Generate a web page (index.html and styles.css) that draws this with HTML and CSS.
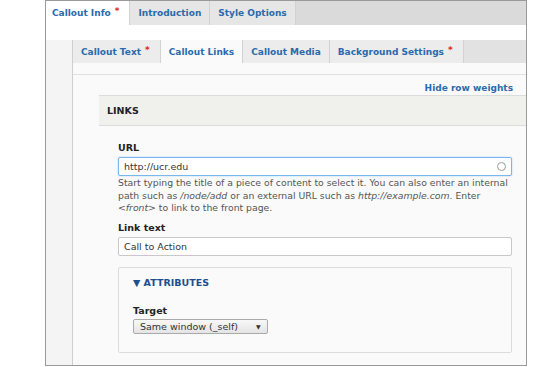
FILE: index.html
```html
<!DOCTYPE html>
<html lang="en">
<head>
    <meta charset="UTF-8">
    <title>Callout Links</title>
    <link rel="stylesheet" href="styles.css">
</head>
<body>
    <div class="frame">
        <ul class="tabs primary">
            <li class="active has-req">Callout Info <span class="req">*</span></li>
            <li>Introduction</li>
            <li>Style Options</li>
        </ul>
        <div class="gap"></div>
        <div class="sub-area">
            <div class="panel">
                <ul class="tabs secondary">
                    <li class="has-req">Callout Text <span class="req">*</span></li>
                    <li class="active">Callout Links</li>
                    <li>Callout Media</li>
                    <li class="has-req">Background Settings <span class="req">*</span></li>
                </ul>
                <div class="panel-body">
                    <div class="pane">
                        <div class="row-weights"><a href="#">Hide row weights</a></div>
                        <div class="table-head">LINKS</div>
                        <div class="fields">
                            <div class="form-item">
                                <label>URL</label>
                                <div class="input focused">
                                    <span>http://ucr.edu</span>
                                    <span class="throbber"></span>
                                </div>
                                <div class="description">
                                    Start typing the title of a piece of content to select it. You can also enter an internal
                                    path such as <em>/node/add</em> or an external URL such as <em>http://example.com</em>. Enter
                                    <em>&lt;front&gt;</em> to link to the front page.
                                </div>
                            </div>
                            <div class="form-item">
                                <label>Link text</label>
                                <div class="input"><span>Call to Action</span></div>
                            </div>
                            <fieldset class="attributes">
                                <div class="legend">&#9660; ATTRIBUTES</div>
                                <label class="target">Target</label>
                                <div class="select">Same window (_self) <span class="arrow">&#9660;</span></div>
                            </fieldset>
                        </div>
                    </div>
                </div>
            </div>
        </div>
    </div>
</body>
</html>
```

FILE: styles.css
```css
body {
    margin: 0;
    background: #fff;
    font-family: "DejaVu Sans", Verdana, sans-serif;
    color: #333;
}
.frame {
    margin-left: 45px;
    width: 482px;
    height: 366px;
    box-sizing: border-box;
    border: 1px solid #999;
    display: flex;
    flex-direction: column;
}
.tabs {
    list-style: none;
    margin: 0;
    padding: 0;
    display: flex;
    font-size: 9px;
    font-weight: bold;
    color: #2a6aad;
}
.tabs li {
    padding: 0 8px;
    display: flex;
    align-items: center;
    border-right: 1px solid #d2d2d2;
}
.tabs li.has-req {
    padding-right: 10px;
}
.tabs .req {
    color: #e0261f;
    margin-left: 4px;
    position: relative;
    top: -2px;
}
.primary {
    height: 24px;
    background: #dadada;
}
.primary li {
    background: #e6e6e6;
}
.primary li.active {
    background: #fff;
    padding-left: 6px;
}
.gap {
    height: 15px;
    background: #fff;
}
.sub-area {
    flex: 1;
    background: #f4f4f4;
    padding-left: 26px;
    display: flex;
}
.panel {
    flex: 1;
    border-left: 1px solid #cfcfcf;
    display: flex;
    flex-direction: column;
}
.secondary {
    height: 23px;
    background: #e2e2e2;
}
.secondary li {
    background: #ececec;
}
.secondary li.active {
    background: #fafafa;
}
.panel-body {
    flex: 1;
    background: #fafafa;
    padding-top: 11px;
}
.pane {
    border-top: 1px solid #e0e0e0;
}
.row-weights {
    text-align: right;
    padding: 8px 13px 0 0;
    height: 12px;
    font-size: 9px;
    font-weight: bold;
}
.row-weights a {
    color: #2a6aad;
    text-decoration: none;
}
.table-head {
    margin-left: 26px;
    height: 29px;
    background: #f0f0ec;
    border-top: 1px solid #dcdcdc;
    border-bottom: 1px solid #dcdcdc;
    font-size: 9.5px;
    font-weight: bold;
    color: #222;
    padding-left: 8px;
    display: flex;
    align-items: center;
}
.fields {
    padding: 16px 14px 0 45px;
}
.form-item {
    margin-bottom: 7px;
}
label {
    display: block;
    font-size: 9.5px;
    font-weight: bold;
    color: #222;
    margin-bottom: 3px;
    line-height: 12px;
}
.input {
    height: 19px;
    box-sizing: border-box;
    border: 1px solid #c8c8c8;
    border-radius: 2px;
    background: #fff;
    font-size: 9.5px;
    color: #333;
    padding: 0 5px;
    display: flex;
    align-items: center;
    justify-content: space-between;
}
.input.focused {
    border-color: #7ab7ef;
    box-shadow: 0 0 2px #a9d1f5;
}
.throbber {
    width: 7px;
    height: 7px;
    border: 1px solid #9a9a9a;
    border-radius: 50%;
}
.description {
    font-size: 9.3px;
    line-height: 12.5px;
    color: #555;
    margin-top: 1px;
}
.attributes {
    margin: 11px 0 0;
    border: 1px solid #dcdcdc;
    border-radius: 2px;
    padding: 9px 14px 0;
    height: 86px;
    box-sizing: border-box;
}
.legend {
    font-size: 9.5px;
    font-weight: bold;
    color: #1d4f8c;
    margin-bottom: 18px;
}
.target {
    line-height: 9px;
    margin-bottom: 0;
}
.select {
    display: inline-flex;
    align-items: center;
    height: 13px;
    padding: 0 6px;
    border: 1px solid #aaa;
    border-radius: 2px;
    background: linear-gradient(#f8f8f8, #e4e4e4);
    font-size: 9.5px;
    color: #333;
}
.select .arrow {
    font-size: 6px;
    margin-left: 18px;
}
```
